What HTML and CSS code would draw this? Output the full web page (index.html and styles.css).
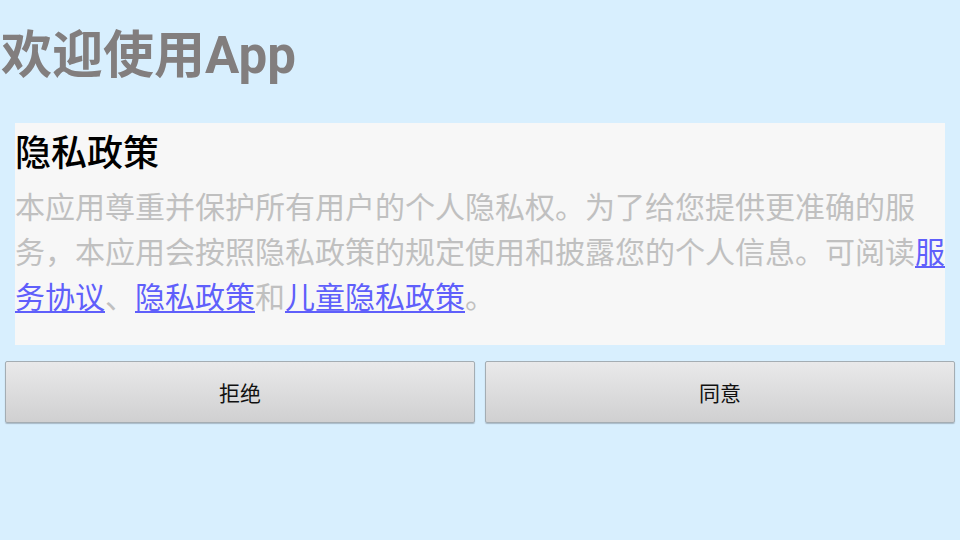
FILE: index.html
```html
<!DOCTYPE html>
<html lang="zh-CN">
<head>
<meta charset="utf-8">
<title>欢迎使用App</title>
<link rel="stylesheet" href="styles.css">
</head>
<body>
<div class="page">
  <h1 class="title">欢迎使用App</h1>
  <div class="card">
    <h2 class="card-title">隐私政策</h2>
    <p class="card-text">本应用尊重并保护所有用户的个人隐私权。为了给您提供更准确的服务，本应用会按照隐私政策的规定使用和披露您的个人信息。可阅读<a class="link" href="#">服务协议</a>、<a class="link" href="#">隐私政策</a>和<a class="link" href="#">儿童隐私政策</a>。</p>
  </div>
  <div class="actions">
    <button class="btn" type="button">拒绝</button>
    <button class="btn" type="button">同意</button>
  </div>
</div>
</body>
</html>
```
FILE: styles.css
```css
html, body {
  margin: 0;
  padding: 0;
  background: #d8effe;
}
body {
  width: 960px;
  height: 540px;
  overflow: hidden;
  font-family: Roboto, "Noto Sans CJK SC", sans-serif;
}
.page {
  display: flex;
  flex-direction: column;
}
.title {
  margin: 0;
  padding-left: 1px;
  font-size: 51px;
  font-weight: 700;
  line-height: 112px;
  color: #827e7e;
}
.card {
  margin: 11px 15px 0;
  background: #f7f7f7;
  padding: 0 0 25px;
}
.card-title {
  margin: 0;
  font-size: 36px;
  font-weight: 500;
  line-height: 62px;
  color: #000;
}
.card-text {
  margin: 0;
  font-size: 30px;
  line-height: 45px;
  color: #c0c0c0;
}
.link {
  color: #5f5ffb;
  text-decoration: underline;
  text-decoration-thickness: 1.5px;
  text-underline-offset: 3px;
}
.actions {
  display: flex;
  gap: 10px;
  margin: 16px 5px 0;
}
.btn {
  flex: 1;
  height: 62px;
  border: 1px solid #a4adb3;
  border-radius: 2px;
  background: linear-gradient(#e9e9ea, #d0d0d1);
  box-shadow: 0 1px 1px rgba(80, 90, 100, 0.35);
  font-family: Roboto, "Noto Sans CJK SC", sans-serif;
  font-size: 21px;
  color: #111;
  padding: 0;
}
```
